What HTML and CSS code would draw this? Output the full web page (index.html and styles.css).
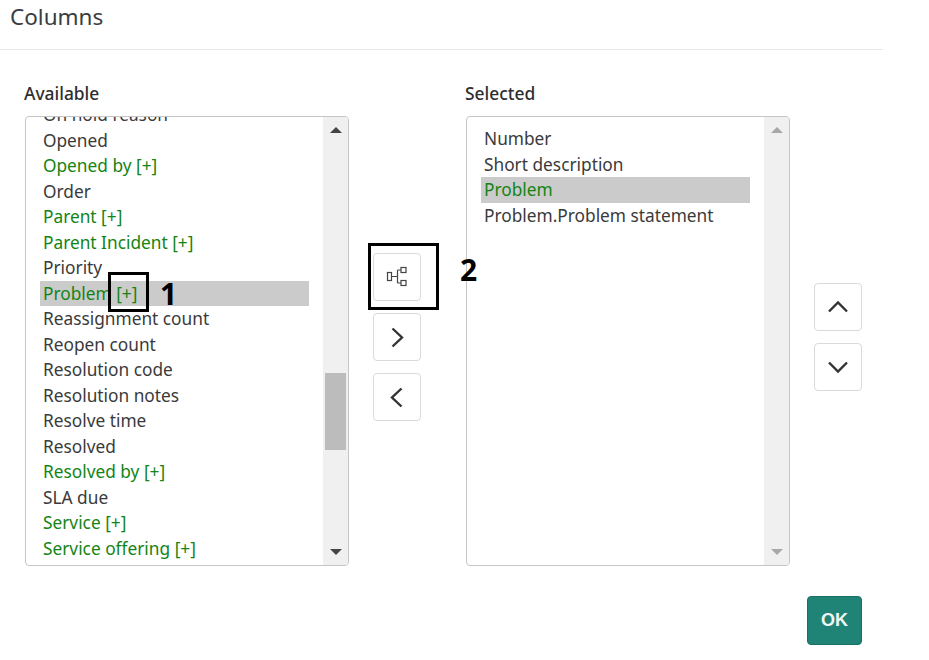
FILE: index.html
```html
<!DOCTYPE html>
<html lang="en">
<head>
<meta charset="utf-8">
<title>Columns</title>
<link rel="stylesheet" href="styles.css">
</head>
<body>
<div class="dialog">
  <header class="dialog-header"><h1 class="dialog-title">Columns</h1></header>
  <main class="slush">
    <section class="column">
      <h2 class="column-label">Available</h2>
      <div class="listbox">
        <ul class="options options-scrolled">
          <li class="option">On hold reason</li>
          <li class="option">Opened</li>
          <li class="option ref">Opened by [+]</li>
          <li class="option">Order</li>
          <li class="option ref">Parent [+]</li>
          <li class="option ref">Parent Incident [+]</li>
          <li class="option">Priority</li>
          <li class="option ref selected">Problem [+]</li>
          <li class="option">Reassignment count</li>
          <li class="option">Reopen count</li>
          <li class="option">Resolution code</li>
          <li class="option">Resolution notes</li>
          <li class="option">Resolve time</li>
          <li class="option">Resolved</li>
          <li class="option ref">Resolved by [+]</li>
          <li class="option">SLA due</li>
          <li class="option ref">Service [+]</li>
          <li class="option ref">Service offering [+]</li>
        </ul>
        <div class="scrollbar">
          <span class="arrow arrow-up"></span>
          <span class="track-space track-before"></span>
          <span class="thumb"></span>
          <span class="track-space"></span>
          <span class="arrow arrow-down"></span>
        </div>
      </div>
    </section>
    <div class="move-buttons">
      <button class="icon-btn" type="button" aria-label="Expand">
        <svg width="22" height="22" viewBox="0 0 22 22" fill="none" stroke="#444" stroke-width="1.2"><rect x="1.5" y="6.5" width="4" height="8"/><rect x="15" y="1.5" width="5" height="5"/><rect x="15" y="14.5" width="5" height="5"/><path d="M5.5 10.5h6M11.5 4v13M11.5 4H15M11.5 17H15"/></svg>
      </button>
      <button class="icon-btn" type="button" aria-label="Add">
        <svg width="22" height="22" viewBox="0 0 22 22" fill="none" stroke="#333" stroke-width="2.4"><path d="M6.5 2.500l9.500 9-9.500 9"/></svg>
      </button>
      <button class="icon-btn" type="button" aria-label="Remove">
        <svg width="22" height="22" viewBox="0 0 22 22" fill="none" stroke="#333" stroke-width="2.4"><path d="M15.500 2.500l-9.500 9 9.500 9"/></svg>
      </button>
    </div>
    <section class="column">
      <h2 class="column-label">Selected</h2>
      <div class="listbox">
        <ul class="options">
          <li class="option">Number</li>
          <li class="option">Short description</li>
          <li class="option ref selected">Problem</li>
          <li class="option">Problem.Problem statement</li>
        </ul>
        <div class="scrollbar scrollbar-idle">
          <span class="arrow arrow-up"></span>
          <span class="track-space"></span>
          <span class="arrow arrow-down"></span>
        </div>
      </div>
    </section>
    <div class="order-buttons">
      <button class="icon-btn" type="button" aria-label="Move up">
        <svg width="22" height="22" viewBox="0 0 22 22" fill="none" stroke="#333" stroke-width="2.4"><path d="M2 15.500l9-9 9 9"/></svg>
      </button>
      <button class="icon-btn" type="button" aria-label="Move down">
        <svg width="22" height="22" viewBox="0 0 22 22" fill="none" stroke="#333" stroke-width="2.4"><path d="M2 6.500l9 9 9-9"/></svg>
      </button>
    </div>
  </main>
  <footer class="dialog-footer"><button class="ok-btn" type="button">OK</button></footer>
  <div class="callout callout-one"></div>
  <span class="callout-num num-one">1</span>
  <div class="callout callout-two"></div>
  <span class="callout-num num-two">2</span>
</div>
</body>
</html>
```

FILE: styles.css
```css
* { box-sizing: border-box; }
html, body { margin: 0; height: 100%; background: #fff; overflow: hidden; }
body { font-family: "Noto Sans", "Open Sans", sans-serif; color: #2e2e2e; }
.dialog { position: relative; width: 883px; height: 660px; }
.dialog-header { height: 50px; border-bottom: 1px solid #e6e8e8; padding: 0 10px; }
.dialog-title { margin: 0; font-size: 22.5px; font-weight: 400; line-height: 33px; color: #3a3d3f; }
.slush { display: flex; align-items: flex-start; padding: 30px 0 0 25px; }
.column { width: 324px; flex: none; }
.column-label { margin: 0 0 10px -1px; font-size: 17.4px; font-weight: 500; line-height: 26px; color: #2e2e2e; }
.listbox { display: flex; height: 450px; border: 1px solid #c4c6c6; border-radius: 4px; overflow: hidden; }
.options { flex: 1; list-style: none; margin: 0; padding: 9px 14px 0 14px; font-size: 17.3px; line-height: 25px; color: #3a3a3a; overflow: hidden; }
.options-scrolled { padding-top: 0; }
.options-scrolled .option:first-child { margin-top: -14.6px; }
.option { padding-left: 3px; height: 25.5px; white-space: nowrap; }
.ref { color: #148414; }
.selected { background: #cbcbcb; }
.scrollbar { flex: none; width: 25px; background: #f0f0f0; display: flex; flex-direction: column; align-items: center; padding: 0 1px; }
.arrow { flex: none; width: 0; height: 0; margin: 10px 0; border-left: 6px solid transparent; border-right: 6px solid transparent; }
.arrow-up { border-bottom: 6px solid #444; }
.arrow-down { border-top: 6px solid #444; }
.scrollbar-idle .arrow-up { border-bottom-color: #a8a8a8; }
.scrollbar-idle .arrow-down { border-top-color: #a8a8a8; }
.track-space { flex: 1; }
.track-before { flex: none; height: 230px; }
.thumb { flex: none; width: 21px; height: 77px; background: #bcbcbc; }
.move-buttons { flex: none; display: flex; flex-direction: column; gap: 12px; width: 48px; margin: 173px 45px 0 24px; }
.order-buttons { flex: none; display: flex; flex-direction: column; gap: 12px; width: 48px; margin: 203px 0 0 24px; }
.icon-btn { display: flex; align-items: center; justify-content: center; width: 48px; height: 48px; padding: 0; background: #fff; border: 1px solid #d8dadb; border-radius: 4px; }
.dialog-footer { display: flex; justify-content: flex-end; padding: 30px 21px 0 0; }
.ok-btn { width: 55px; height: 49px; padding: 0; background: #1f8476; border: 1px solid #1a6f63; border-radius: 4px; color: #eef8f6; font-family: "Liberation Sans", sans-serif; font-size: 18px; font-weight: 700; }
.callout { position: absolute; border: 3px solid #000; background: transparent; }
.callout-one { left: 108px; top: 272px; width: 41px; height: 40px; }
.callout-two { left: 368px; top: 243px; width: 71px; height: 67px; }
.callout-num { position: absolute; font-size: 30px; line-height: 32px; font-weight: 700; color: #000; }
.num-one { left: 160px; top: 278px; }
.num-two { left: 460px; top: 254px; }
```
